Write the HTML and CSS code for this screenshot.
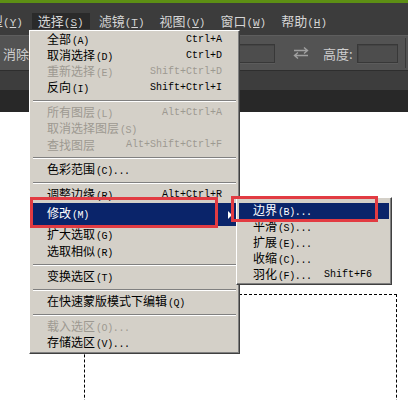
FILE: index.html
```html
<!DOCTYPE html>
<html>
<head>
<meta charset="utf-8">
<link rel="stylesheet" href="styles.css">
</head>
<body>
<div class="screen">
  <div class="green"></div>
  <div class="menubar">
    <span class="mb first">类型<span class="lat">(<u>Y</u>)</span></span>
    <span class="mb active">选择<span class="lat">(<u>S</u>)</span></span>
    <span class="mb">滤镜<span class="lat">(<u>T</u>)</span></span>
    <span class="mb">视图<span class="lat">(<u>V</u>)</span></span>
    <span class="mb">窗口<span class="lat">(<u>W</u>)</span></span>
    <span class="mb">帮助<span class="lat">(<u>H</u>)</span></span>
  </div>
  <div class="options">
    <span class="opt-text">消除锯齿</span>
    <span class="field f1"></span>
    <svg class="swap" width="22" height="14" viewBox="0 0 22 14">
      <path d="M4 4.5H17M14 1.5L17.5 4.5L14 7.5" fill="none" stroke="#a0a0a0" stroke-width="1.4"/>
      <path d="M18 9.5H5M8 6.5L4.5 9.5L8 12.5" fill="none" stroke="#a0a0a0" stroke-width="1.4"/>
    </svg>
    <span class="opt-text h">高度:</span>
    <span class="field f2"></span>
    <span class="vline"></span>
  </div>
  <div class="tabs"></div>
  <div class="tabs2"></div>
  <div class="canvas"><div class="marquee"></div></div>
</div>

<div class="menu">
  <div class="item"><span>全部<span class="k">(A)</span></span><span class="sc">Ctrl+A</span></div>
  <div class="item"><span>取消选择<span class="k">(D)</span></span><span class="sc">Ctrl+D</span></div>
  <div class="item dis"><span>重新选择<span class="k">(E)</span></span><span class="sc">Shift+Ctrl+D</span></div>
  <div class="item"><span>反向<span class="k">(I)</span></span><span class="sc">Shift+Ctrl+I</span></div>
  <div class="sep"></div>
  <div class="item dis"><span>所有图层<span class="k">(L)</span></span><span class="sc">Alt+Ctrl+A</span></div>
  <div class="item dis"><span>取消选择图层<span class="k">(S)</span></span></div>
  <div class="item dis"><span>查找图层</span><span class="sc">Alt+Shift+Ctrl+F</span></div>
  <div class="sep"></div>
  <div class="item"><span>色彩范围<span class="k">(C)...</span></span></div>
  <div class="sep"></div>
  <div class="item"><span>调整边缘<span class="k">(R)...</span></span><span class="sc">Alt+Ctrl+R</span></div>
  <div class="item hl tall"><span>修改<span class="k">(M)</span></span><span class="arrow"></span></div>
  <div class="item mid"><span>扩大选取<span class="k">(G)</span></span></div>
  <div class="item"><span>选取相似<span class="k">(R)</span></span></div>
  <div class="sep"></div>
  <div class="item"><span>变换选区<span class="k">(T)</span></span></div>
  <div class="sep"></div>
  <div class="item"><span>在快速蒙版模式下编辑<span class="k">(Q)</span></span></div>
  <div class="sep"></div>
  <div class="item dis"><span>载入选区<span class="k">(O)...</span></span></div>
  <div class="item"><span>存储选区<span class="k">(V)...</span></span></div>
</div>

<div class="submenu">
  <div class="item hl"><span>边界<span class="k">(B)...</span></span></div>
  <div class="item"><span>平滑<span class="k">(S)...</span></span></div>
  <div class="item"><span>扩展<span class="k">(E)...</span></span></div>
  <div class="item"><span>收缩<span class="k">(C)...</span></span></div>
  <div class="item"><span>羽化<span class="k">(F)...</span></span><span class="sc">Shift+F6</span></div>
</div>

<div class="redbox r1"></div>
<div class="redbox r2"></div>
</body>
</html>
```

FILE: styles.css
```css
body {
  margin: 0;
  width: 408px;
  height: 400px;
  overflow: hidden;
  position: relative;
  background: #fff;
  font-family: "Noto Sans CJK SC", sans-serif;
}

.screen {
  display: flex;
  flex-direction: column;
  height: 400px;
  overflow: hidden;
}

.green {
  height: 3px;
  background: #5d8f14;
}

.menubar {
  height: 32px;
  box-sizing: border-box;
  background: #3c3c3c;
  display: flex;
  align-items: flex-start;
  gap: 3px;
  padding-top: 10px;
  overflow: hidden;
  color: #d6d6d6;
  font-size: 13px;
  white-space: nowrap;
}

.mb {
  flex: none;
  height: 16px;
  line-height: 16px;
  padding: 0 6px;
}

.mb.first {
  margin-left: -29px;
}

.mb.active {
  background: #2a2a2a;
}

.mb .lat {
  font-family: "Liberation Mono", monospace;
  font-size: 11px;
}

.options {
  height: 36px;
  box-sizing: border-box;
  background: #535353;
  border-top: 1px solid #5e5e5e;
  border-bottom: 1px solid #2e2e2e;
  display: flex;
  align-items: center;
  padding-left: 3px;
  color: #cfcfcf;
  font-size: 13px;
  white-space: nowrap;
  overflow: hidden;
}

.field {
  flex: none;
  height: 19px;
  box-sizing: border-box;
  background: #4d4d4d;
  border: 1px solid #383838;
  box-shadow: inset 1px 1px 0 #444, 0 1px 0 #5c5c5c;
}

.f1 {
  margin-left: 150px;
  width: 70px;
}

.swap {
  flex: none;
  margin-left: 15px;
}

.opt-text.h {
  margin-left: 11px;
}

.f2 {
  margin-left: 4px;
  width: 41px;
}

.vline {
  flex: none;
  margin-left: 7px;
  width: 1px;
  height: 30px;
  background: #3a3a3a;
}

.tabs {
  height: 19px;
  background: #3d3d3d;
}

.tabs2 {
  height: 22px;
  background: #282828;
}

.canvas {
  flex: 1;
  position: relative;
  background: #fff;
  overflow: hidden;
}

.marquee {
  position: absolute;
  left: 84px;
  top: 182px;
  width: 313px;
  height: 300px;
  box-sizing: border-box;
  border: 1px dashed #000;
}

.menu,
.submenu {
  position: absolute;
  box-sizing: border-box;
  background: #d4d0c8;
  border: 1px solid;
  border-color: #fff #404040 #404040 #fff;
  box-shadow: inset -1px -1px 0 #808080;
  font-size: 12px;
  color: #000;
  white-space: nowrap;
}

.menu {
  left: 29px;
  top: 30px;
  width: 211px;
  padding: 1px 2px 2px 2px;
}

.submenu {
  left: 236px;
  top: 197px;
  width: 156px;
  padding: 5px 2px 1px 2px;
}

.item {
  height: 16px;
  line-height: 16px;
  display: flex;
  justify-content: space-between;
  align-items: center;
  padding: 0 15px;
}

.submenu .item {
  padding: 0 17px 0 14px;
}

.item.tall {
  height: 23px;
}

.item.mid {
  height: 18px;
}

.k {
  font-family: "Liberation Mono", monospace;
  font-size: 10px;
  letter-spacing: -0.4px;
  margin-left: 1px;
}

.sc {
  font-family: "Liberation Mono", monospace;
  font-size: 10px;
}

.dis {
  color: #9d9991;
}

.hl {
  background: #0a246a;
  color: #fff;
}

.arrow {
  width: 0;
  height: 0;
  border-left: 4px solid #fff;
  border-top: 4px solid transparent;
  border-bottom: 4px solid transparent;
  margin-right: -10px;
}

.sep {
  height: 0;
  margin: 4px 1px 3px;
  border-top: 1px solid #808080;
  border-bottom: 1px solid #fff;
}

.redbox {
  position: absolute;
  box-sizing: border-box;
  border: 3px solid #e23b42;
}

.r1 {
  left: 30px;
  top: 197px;
  width: 188px;
  height: 31px;
}

.r2 {
  left: 231px;
  top: 196px;
  width: 147px;
  height: 26px;
}
```
